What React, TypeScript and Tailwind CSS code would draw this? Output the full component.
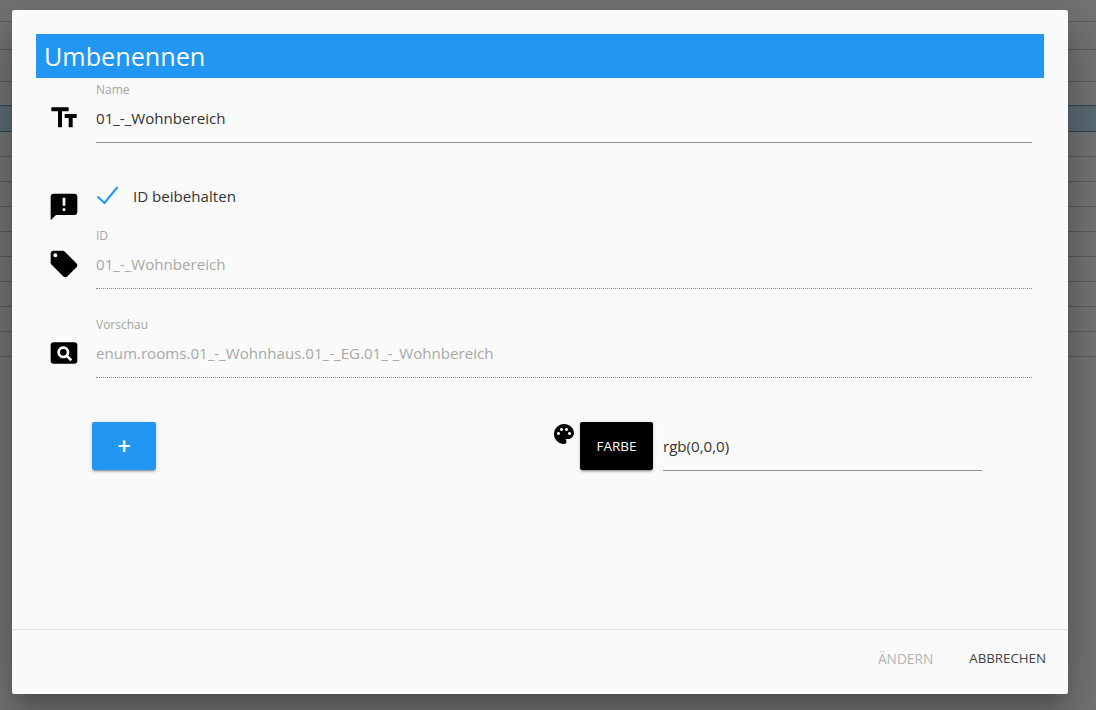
import { MdAnnouncement, MdLocalOffer, MdPageview, MdPalette, MdTextFields } from "react-icons/md";

const rowHeights = [22, 28, 32, 24, 26, 25, 25, 25, 25, 25, 25, 25, 25, 25];

function Field({
  label,
  value,
  disabled,
  className,
}: {
  label: string;
  value: string;
  disabled?: boolean;
  className?: string;
}) {
  return (
    <div className={className}>
      <div className="h-[16px] text-[12px] leading-[16px] text-[#a3a3a3]">{label}</div>
      <div
        className={
          disabled
            ? "mt-[8px] h-[37px] border-b border-dotted border-[#8a8a8a] text-[15.1px] leading-[24px] text-[#a8a8a8]"
            : "mt-[8px] h-[37px] border-b border-[#949494] text-[15.1px] leading-[24px] text-[#333333]"
        }
      >
        {value}
      </div>
    </div>
  );
}

export default function App() {
  return (
    <div className="relative h-[710px] w-[1096px] overflow-hidden bg-[#737373] font-['Open_Sans','Noto_Sans',sans-serif]">
      {/* liste hinter dem dialog */}
      <div className="flex flex-col">
        {rowHeights.map((h, i) => (
          <div
            key={i}
            style={{ height: h }}
            className={
              i === 4
                ? "border-b border-[#2f4550] bg-[#5a6b73]"
                : i === 3
                  ? "border-b border-[#2f4550]"
                  : "border-b border-[#5c5c5c]"
            }
          />
        ))}
      </div>

      <div className="absolute top-[10px] left-[12px] flex h-[684px] w-[1056px] flex-col rounded-[2px] bg-[#fafafa] shadow-[0_11px_15px_-7px_rgba(0,0,0,0.2),0_24px_38px_3px_rgba(0,0,0,0.14),0_9px_46px_8px_rgba(0,0,0,0.12)]">
        <div className="flex-1 px-[24px] pt-[24px]">
          <div className="h-[44px] bg-[#2196f3] pl-[8px] text-[25.2px] leading-[45px] text-white">Umbenennen</div>

          <div className="flex pl-[12px]">
            <div className="flex w-[48px] flex-col">
              <MdTextFields className="mt-[24px] text-[32px] text-black" />
              <MdAnnouncement className="mt-[57px] text-[32px] text-black" />
              <MdLocalOffer className="mt-[25px] text-[32px] text-black" />
              <MdPageview className="mt-[57px] text-[32px] text-black" />
            </div>
            <div className="mr-[12px] flex-1">
              <Field className="pt-[4px]" label="Name" value="01_-_Wohnbereich" />
              <div className="mt-[37px] flex h-[32px] items-center">
                <svg viewBox="0 0 24 24" className="h-[24px] w-[24px]" fill="none" stroke="#2196f3" strokeWidth="2">
                  <path d="M1.5 12.5 L8.5 19 L21.5 3" />
                </svg>
                <span className="ml-[13px] text-[15.1px] text-[#333333]">ID beibehalten</span>
              </div>
              <Field className="mt-[16px]" label="ID" value="01_-_Wohnbereich" disabled />
              <Field className="mt-[28px]" label="Vorschau" value="enum.rooms.01_-_Wohnhaus.01_-_EG.01_-_Wohnbereich" disabled />

              <div className="mt-[44px] flex items-start">
                <button className="ml-[-4px] flex h-[48px] w-[64px] items-center justify-center rounded-[2px] bg-[#2196f3] text-[24px] font-semibold text-white shadow-[0_3px_1px_-2px_rgba(0,0,0,0.2),0_2px_2px_0_rgba(0,0,0,0.14),0_1px_5px_0_rgba(0,0,0,0.12)]">
                  +
                </button>
                <MdPalette className="ml-[396px] text-[24px] text-black" />
                <button className="ml-[4px] h-[48px] w-[73px] rounded-[2px] bg-black text-[13.5px] font-medium text-white shadow-[0_3px_1px_-2px_rgba(0,0,0,0.2),0_2px_2px_0_rgba(0,0,0,0.14),0_1px_5px_0_rgba(0,0,0,0.12)]">
                  FARBE
                </button>
                <div className="ml-[10px] h-[49px] w-[319px] border-b border-[#949494] pt-[14px] text-[15.1px] leading-[20px] text-[#333333]">
                  rgb(0,0,0)
                </div>
              </div>
            </div>
          </div>
        </div>

        <div className="flex h-[65px] items-center justify-end gap-[36px] border-t border-[#e2e2e2] pr-[22px] pb-[6px] text-[13.3px]">
          <span className="text-[13.7px] text-[#b3b3b3]">ÄNDERN</span>
          <span className="text-[#444444]">ABBRECHEN</span>
        </div>
      </div>
    </div>
  );
}
